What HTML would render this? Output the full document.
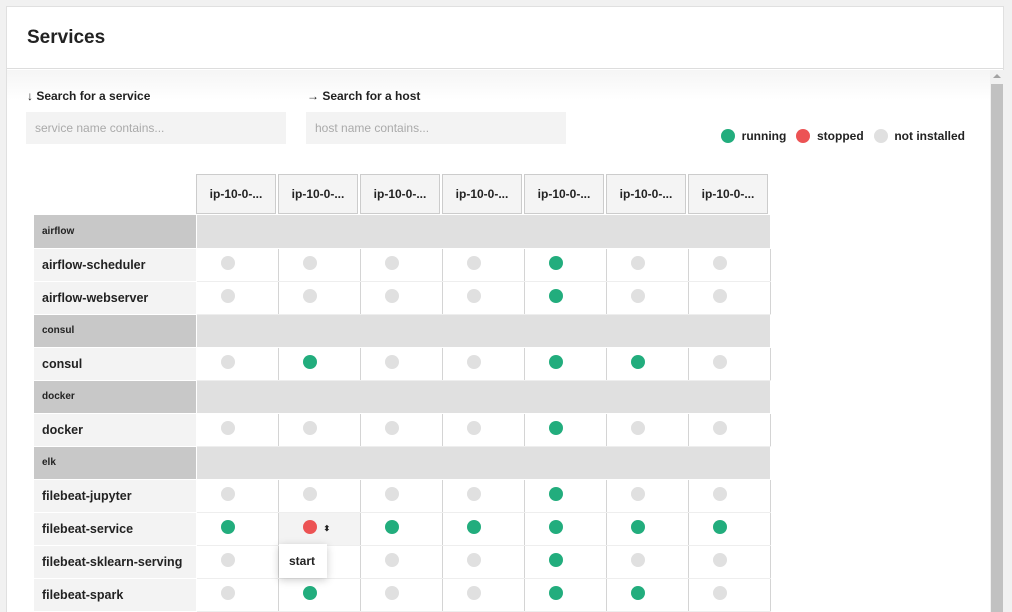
<!DOCTYPE html>
<html><head><style>
*{margin:0;padding:0;box-sizing:border-box}
html,body{width:1012px;height:612px;overflow:hidden}
body{background:#f1f1f1;font-family:"Liberation Sans",Arial,sans-serif;color:#222;position:relative}
.card{position:absolute;left:6px;top:6px;width:998px;height:606px;background:#fff;border:1px solid #e0e0e0;border-bottom:none;overflow:hidden}
.hd{height:62px;border-bottom:1px solid #ddd;padding:20px 0 0 20px;font-size:19px;font-weight:bold}
.shadow{position:absolute;left:0;top:63px;width:984px;height:30px;background:linear-gradient(#f5f5f5,#fff)}
.lbl{position:absolute;font-size:12px;font-weight:bold}
.inp{position:absolute;width:260px;height:32px;background:#f3f3f3;font-size:12px;color:#aaa;padding:9px 9px}
.leg{position:absolute;font-size:12px;font-weight:bold;display:flex;align-items:center}
.dot{display:inline-block;width:14px;height:14px;border-radius:50%;background:#e0e0e0}
.g{background:#22ad7d}.r{background:#ec5354}
table{position:absolute;left:34px;top:173px;border-collapse:collapse}
td{padding:0;height:33px;font-size:12.5px;font-weight:bold;vertical-align:middle}
td.l{width:162px;background:#f3f3f3;padding-left:8px;border-bottom:1px solid #fff;border-right:1px solid #fff}
td.c{width:82px;border-right:1px solid #d4d4d4;border-bottom:1px solid #eee;padding-left:24px}
td.gl{background:#c8c8c8;font-size:10px;padding-left:8px;border-bottom:1px solid #fff;border-right:1px solid #fff}
td.gr{background:#e0e0e0;border-bottom:1px solid #fff}
tr.h td{height:42px}
.hc{width:80px;height:40px;background:#f4f4f4;border:1px solid #ccc;font-size:12px;font-weight:bold;text-align:center;line-height:38px;margin-right:2px}
.sb{position:absolute;left:990px;top:70px;width:14px;height:542px;background:#f1f1f1}
.sb div{position:absolute;left:1px;top:14px;width:12px;height:530px;background:#c1c1c1}
.sb span{position:absolute;left:3px;top:4px;width:0;height:0;border-left:4px solid transparent;border-right:4px solid transparent;border-bottom:4px solid #a3a3a3}
.tip{position:absolute;left:279px;top:544px;width:48px;height:34px;background:#fff;box-shadow:0 2px 8px rgba(0,0,0,.2);font-size:12px;font-weight:bold;padding:10px 0 0 10px}
</style></head><body>
<div class="card">
<div class="hd">Services</div>
<div class="shadow"></div>
</div>
<div class="lbl" style="left:27px;top:89px">↓ Search for a service</div>
<div class="lbl" style="left:307px;top:89px">→ Search for a host</div>
<div class="inp" style="left:26px;top:112px">service name contains...</div>
<div class="inp" style="left:306px;top:112px">host name contains...</div>
<div class="leg" style="left:721px;top:129px"><span class="dot g"></span>&nbsp;&nbsp;running&nbsp;&nbsp;&nbsp;<span class="dot r"></span>&nbsp;&nbsp;stopped&nbsp;&nbsp;&nbsp;<span class="dot"></span>&nbsp;&nbsp;not installed</div>
<table>
<tr class="h"><td></td><td><div class="hc">ip-10-0-...</div></td><td><div class="hc">ip-10-0-...</div></td><td><div class="hc">ip-10-0-...</div></td><td><div class="hc">ip-10-0-...</div></td><td><div class="hc">ip-10-0-...</div></td><td><div class="hc">ip-10-0-...</div></td><td><div class="hc">ip-10-0-...</div></td></tr>
<tr><td class="gl">airflow</td><td class="gr" colspan="7"></td></tr>
<tr><td class="l">airflow-scheduler</td><td class="c"><span class="dot"></span></td><td class="c"><span class="dot"></span></td><td class="c"><span class="dot"></span></td><td class="c"><span class="dot"></span></td><td class="c"><span class="dot g"></span></td><td class="c"><span class="dot"></span></td><td class="c"><span class="dot"></span></td></tr>
<tr><td class="l">airflow-webserver</td><td class="c"><span class="dot"></span></td><td class="c"><span class="dot"></span></td><td class="c"><span class="dot"></span></td><td class="c"><span class="dot"></span></td><td class="c"><span class="dot g"></span></td><td class="c"><span class="dot"></span></td><td class="c"><span class="dot"></span></td></tr>
<tr><td class="gl">consul</td><td class="gr" colspan="7"></td></tr>
<tr><td class="l">consul</td><td class="c"><span class="dot"></span></td><td class="c"><span class="dot g"></span></td><td class="c"><span class="dot"></span></td><td class="c"><span class="dot"></span></td><td class="c"><span class="dot g"></span></td><td class="c"><span class="dot g"></span></td><td class="c"><span class="dot"></span></td></tr>
<tr><td class="gl">docker</td><td class="gr" colspan="7"></td></tr>
<tr><td class="l">docker</td><td class="c"><span class="dot"></span></td><td class="c"><span class="dot"></span></td><td class="c"><span class="dot"></span></td><td class="c"><span class="dot"></span></td><td class="c"><span class="dot g"></span></td><td class="c"><span class="dot"></span></td><td class="c"><span class="dot"></span></td></tr>
<tr><td class="gl">elk</td><td class="gr" colspan="7"></td></tr>
<tr><td class="l">filebeat-jupyter</td><td class="c"><span class="dot"></span></td><td class="c"><span class="dot"></span></td><td class="c"><span class="dot"></span></td><td class="c"><span class="dot"></span></td><td class="c"><span class="dot g"></span></td><td class="c"><span class="dot"></span></td><td class="c"><span class="dot"></span></td></tr>
<tr><td class="l">filebeat-service</td><td class="c"><span class="dot g"></span></td><td class="c" style="background:#f3f3f3"><span class="dot r"></span><span style="font-size:8px;margin-left:7px;position:relative;top:-3px">⬍</span></td><td class="c"><span class="dot g"></span></td><td class="c"><span class="dot g"></span></td><td class="c"><span class="dot g"></span></td><td class="c"><span class="dot g"></span></td><td class="c"><span class="dot g"></span></td></tr>
<tr><td class="l">filebeat-sklearn-serving</td><td class="c"><span class="dot"></span></td><td class="c"><span class="dot"></span></td><td class="c"><span class="dot"></span></td><td class="c"><span class="dot"></span></td><td class="c"><span class="dot g"></span></td><td class="c"><span class="dot"></span></td><td class="c"><span class="dot"></span></td></tr>
<tr><td class="l">filebeat-spark</td><td class="c"><span class="dot"></span></td><td class="c"><span class="dot g"></span></td><td class="c"><span class="dot"></span></td><td class="c"><span class="dot"></span></td><td class="c"><span class="dot g"></span></td><td class="c"><span class="dot g"></span></td><td class="c"><span class="dot"></span></td></tr>
</table>
<div class="tip">start</div>
<div class="sb"><span></span><div></div></div>
</body></html>
